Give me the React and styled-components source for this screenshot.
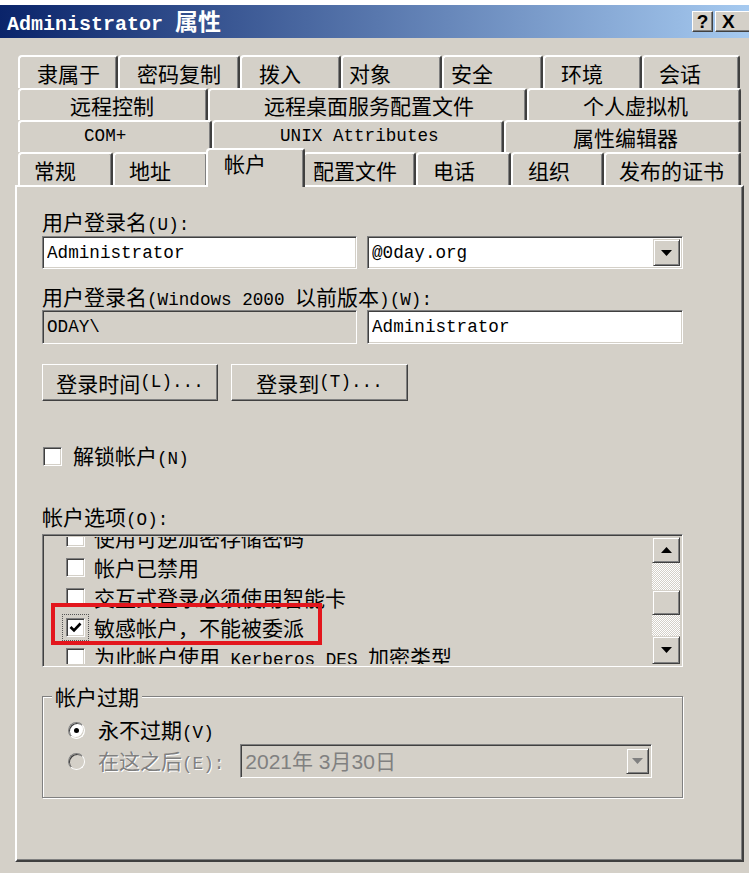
import React from "react";
import styled, { createGlobalStyle, css } from "styled-components";

const FACE = "#d4d0c8";
const SHADOW = "#808080";
const DARK = "#404040";

const GlobalStyle = createGlobalStyle`
  html, body {
    margin: 0;
    padding: 0;
    background: #fff;
  }
  body {
    font-family: "Noto Sans CJK SC", sans-serif;
    font-size: 21px;
    color: #000;
    overflow: hidden;
  }
`;

const Latin = styled.span`
  font-family: "Liberation Mono", monospace;
  font-size: ${(p) => p.$scale || 0.84}em;
  line-height: 1;
`;

// wraps ascii runs so latin text gets the narrow mono face
function Txt({ children, scale }) {
  return String(children)
    .split(/([\x00-\xff]+)/)
    .filter(Boolean)
    .map((part, i) =>
      /^[\x00-\xff]+$/.test(part) ? (
        <Latin key={i} $scale={scale}>
          {part}
        </Latin>
      ) : (
        <React.Fragment key={i}>{part}</React.Fragment>
      )
    );
}

const Window = styled.div`
  margin-top: 5px;
  height: 868px;
  background: ${FACE};
  display: flex;
  flex-direction: column;
  overflow: hidden;
`;

const TitleBar = styled.div`
  height: 33px;
  flex: none;
  display: flex;
  align-items: center;
  justify-content: space-between;
  padding-left: 7px;
  background: linear-gradient(90deg, #0a246a 0%, #a6caf0 100%);
`;

const Title = styled.div`
  color: #fff;
  font-weight: bold;
  font-size: 23px;
  line-height: 26px;
  height: 26px;
  margin-top: -3px;
  white-space: nowrap;
`;

const TitleButtons = styled.div`
  display: flex;
  gap: 2px;
  margin-right: -2px;
`;

const CaptionButton = styled.div`
  width: ${(p) => p.$w}px;
  height: 21px;
  box-sizing: border-box;
  background: ${FACE};
  border: 1px solid;
  border-color: #fff ${DARK} ${DARK} #fff;
  box-shadow: inset -1px -1px 0 ${SHADOW};
  display: flex;
  align-items: center;
  justify-content: ${(p) => (p.$left ? "flex-start" : "center")};
  padding-left: ${(p) => (p.$left ? 6 : 0)}px;
  font-family: "Liberation Sans", sans-serif;
  font-weight: bold;
  font-size: 19px;
  line-height: 1;
`;

const TabStack = styled.div`
  margin: 17px 0 0 18px;
  width: 723px;
  display: flex;
  flex-direction: column;
`;

const TabRow = styled.div`
  display: flex;
  height: ${(p) => p.$h}px;
`;

const Tab = styled.div`
  box-sizing: border-box;
  width: ${(p) => p.$w}px;
  height: 100%;
  flex: none;
  background: ${FACE};
  border-top: 2px solid #fff;
  border-left: 2px solid #fff;
  border-right: 2px solid ${DARK};
  box-shadow: inset -1px 0 0 ${SHADOW};
  border-radius: 4px 3px 0 0;
  padding-left: ${(p) => p.$pad}px;
  display: flex;
  align-items: center;
  white-space: nowrap;
  line-height: 24px;
  ${(p) =>
    p.$active &&
    css`
      position: relative;
      z-index: 2;
      width: ${p.$w + 4}px;
      height: calc(100% + 6px);
      margin: -4px -2px 0;
      padding-left: ${p.$pad + 2}px;
      padding-top: 1px;
      align-items: flex-start;
    `}
`;

const Panel = styled.div`
  margin-left: 15px;
  width: 729px;
  height: 677px;
  box-sizing: border-box;
  border: 2px solid;
  border-color: #fff ${DARK} ${DARK} #fff;
  box-shadow: inset -1px -1px 0 ${SHADOW};
  padding: 22px 59px 0 25px;
  display: flex;
  flex-direction: column;
`;

const Label = styled.div`
  height: 24px;
  line-height: 24px;
  margin-top: ${(p) => p.$mt || 0}px;
  white-space: nowrap;
`;

const FieldRow = styled.div`
  display: grid;
  grid-template-columns: 315px 316px;
  column-gap: 10px;
  margin-top: ${(p) => p.$mt || 0}px;
`;

const sunken = css`
  box-sizing: border-box;
  border: 1px solid;
  border-color: ${SHADOW} #fff #fff ${SHADOW};
  box-shadow: inset 1px 1px 0 ${DARK}, inset -1px -1px 0 ${FACE};
`;

const Field = styled.div`
  ${sunken};
  height: ${(p) => p.$h || 33}px;
  background: ${(p) => (p.$disabled ? FACE : "#fff")};
  display: flex;
  align-items: center;
  padding: 2px 2px 0 4px;
  line-height: 24px;
  white-space: nowrap;
  color: ${(p) => (p.$muted ? SHADOW : "#000")};
`;

const FieldText = styled.span`
  flex: 1;
  overflow: hidden;
  display: flex;
  align-items: center;
  height: 24px;
`;

const ArrowBtn = styled.div`
  width: ${(p) => p.$w || 27}px;
  height: ${(p) => p.$h || 27}px;
  flex: none;
  box-sizing: border-box;
  background: ${FACE};
  border: 1px solid;
  border-color: ${FACE} ${DARK} ${DARK} ${FACE};
  box-shadow: inset 1px 1px 0 #fff, inset -1px -1px 0 ${SHADOW};
  display: flex;
  align-items: center;
  justify-content: center;
`;

const ComboButton = styled(ArrowBtn)`
  margin-top: -2px;
`;

const ButtonRow = styled.div`
  display: flex;
  gap: 13px;
  margin-top: 20px;
`;

const Button = styled.div`
  width: ${(p) => p.$w}px;
  height: 37px;
  box-sizing: border-box;
  background: ${FACE};
  border: 1px solid;
  border-color: #fff ${DARK} ${DARK} #fff;
  box-shadow: inset -1px -1px 0 ${SHADOW};
  display: flex;
  align-items: center;
  justify-content: center;
  line-height: 24px;
  white-space: nowrap;
`;

const CheckRow = styled.div`
  display: flex;
  align-items: center;
  gap: 11px;
  height: 24px;
  line-height: 24px;
  margin-top: ${(p) => p.$mt || 0}px;
  padding-left: 1px;
`;

const Check = styled.span`
  ${sunken};
  width: 19px;
  height: 19px;
  flex: none;
  background: #fff;
  display: inline-flex;
  align-items: center;
  justify-content: center;
  ${(p) =>
    p.$focus &&
    css`
      outline: 1px dotted #555;
      outline-offset: 3px;
    `}
`;

const ListBox = styled.div`
  ${sunken};
  margin-top: 6px;
  height: 133px;
  flex: none;
  background: ${FACE};
  display: flex;
  padding: 2px;
`;

const ListView = styled.div`
  flex: 1;
  overflow: hidden;
`;

const ListInner = styled.div`
  margin-top: -15px;
`;

const ListItem = styled.div`
  height: 30px;
  display: flex;
  align-items: center;
  gap: 9px;
  padding-left: 21px;
  position: relative;
  white-space: nowrap;
  line-height: 24px;
`;

const Highlight = styled.span`
  position: absolute;
  left: 6px;
  top: -9px;
  width: 271px;
  height: 42px;
  box-sizing: border-box;
  border: 4px solid #e3161d;
  pointer-events: none;
`;

const ScrollBar = styled.div`
  width: 28px;
  display: flex;
  flex-direction: column;
`;

const Track = styled.div`
  height: ${(p) => (p.$h ? `${p.$h}px` : "auto")};
  flex: ${(p) => (p.$h ? "none" : 1)};
  background: repeating-conic-gradient(#fff 0 25%, ${FACE} 0 50%) 0 0 / 2px 2px;
`;

const Group = styled.fieldset`
  margin: 17px 0 0;
  padding: 10px 0 19px 25px;
  border: 1px solid ${SHADOW};
  box-shadow: inset 1px 1px 0 #fff, 1px 1px 0 #fff;
  min-width: 0;
  display: flex;
  flex-direction: column;
  gap: 2px;
`;

const Legend = styled.legend`
  margin-left: -16px;
  padding: 0 3px;
  height: 24px;
  line-height: 24px;
  background: ${FACE};
`;

const RadioRow = styled.div`
  display: flex;
  align-items: center;
  gap: 13px;
  height: ${(p) => p.$h || 24}px;
  white-space: nowrap;
  line-height: 24px;
  color: ${(p) => (p.$disabled ? SHADOW : "#000")};
  text-shadow: ${(p) => (p.$disabled ? "1px 1px 0 #fff" : "none")};
`;

const Radio = styled.span`
  width: 17px;
  height: 17px;
  flex: none;
  box-sizing: border-box;
  border-radius: 50%;
  border: 1px solid;
  border-color: ${SHADOW} #fff #fff ${SHADOW};
  box-shadow: inset 1px 1px 0 ${DARK}, inset -1px -1px 0 ${FACE};
  background: ${(p) => (p.$disabled ? FACE : "#fff")};
  display: flex;
  align-items: center;
  justify-content: center;
  &::after {
    content: "";
    width: 5px;
    height: 5px;
    border-radius: 50%;
    background: #000;
    display: ${(p) => (p.$checked ? "block" : "none")};
  }
`;

const DateCombo = styled(Field)`
  margin-left: 3px;
  width: 412px;
  text-shadow: none;
  font-family: "Liberation Sans", "Noto Sans CJK SC", sans-serif;
`;

const Arrow = ({ up, color = "#000" }) => (
  <svg width="11" height="6" viewBox="0 0 11 6">
    <polygon points={up ? "0,6 11,6 5.5,0" : "0,0 11,0 5.5,6"} fill={color} />
  </svg>
);

const Tick = () => (
  <svg width="13" height="11" viewBox="0 0 13 11">
    <polyline points="1.5,5 5,8.5 11.5,1.5" fill="none" stroke="#000" strokeWidth="2.6" />
  </svg>
);

const rows = [
  {
    h: 33,
    tabs: [
      ["隶属于", 100, 17],
      ["密码复制", 122, 17],
      ["拨入", 101, 17],
      ["对象", 101, 6],
      ["安全", 101, 7],
      ["环境", 99, 16],
      ["会话", 98, 15],
    ],
  },
  {
    h: 32,
    tabs: [
      ["远程控制", 190, 50],
      ["远程桌面服务配置文件", 319, 54],
      ["个人虚拟机", 214, 54],
    ],
  },
  {
    h: 32,
    tabs: [
      ["COM+", 194, 64],
      ["UNIX Attributes", 292, 66],
      ["属性编辑器", 237, 67],
    ],
  },
  {
    h: 33,
    tabs: [
      ["常规", 95, 14],
      ["地址", 95, 14],
      ["帐户", 95, 14, true],
      ["配置文件", 113, 8],
      ["电话", 95, 15],
      ["组织", 93, 15],
      ["发布的证书", 137, 13],
    ],
  },
];

const options = [
  ["使用可逆加密存储密码"],
  ["帐户已禁用"],
  ["交互式登录必须使用智能卡"],
  ["敏感帐户，不能被委派", true],
  ["为此帐户使用 Kerberos DES 加密类型"],
];

export default function App() {
  return (
    <>
      <GlobalStyle />
      <Window>
        <TitleBar>
          <Title>
            <Txt scale={0.87}>Administrator 属性</Txt>
          </Title>
          <TitleButtons>
            <CaptionButton $w={21}>?</CaptionButton>
            <CaptionButton $w={36} $left>
              X
            </CaptionButton>
          </TitleButtons>
        </TitleBar>

        <TabStack>
          {rows.map((row, r) => (
            <TabRow key={r} $h={row.h}>
              {row.tabs.map(([label, w, pad, active]) => (
                <Tab key={label} $w={w} $pad={pad} $active={active}>
                  <Txt>{label}</Txt>
                </Tab>
              ))}
            </TabRow>
          ))}
        </TabStack>

        <Panel>
          <Label>
            <Txt>用户登录名(U):</Txt>
          </Label>
          <FieldRow $mt={3}>
            <Field>
              <FieldText>
                <Txt>Administrator</Txt>
              </FieldText>
            </Field>
            <Field>
              <FieldText>
                <Txt>@0day.org</Txt>
              </FieldText>
              <ComboButton>
                <Arrow />
              </ComboButton>
            </Field>
          </FieldRow>

          <Label $mt={15}>
            <Txt>用户登录名(Windows 2000 以前版本)(W):</Txt>
          </Label>
          <FieldRow $mt={2}>
            <Field $h={34} $disabled>
              <FieldText>
                <Txt>ODAY\</Txt>
              </FieldText>
            </Field>
            <Field $h={34}>
              <FieldText>
                <Txt>Administrator</Txt>
              </FieldText>
            </Field>
          </FieldRow>

          <ButtonRow>
            <Button $w={176}>
              <Txt>登录时间(L)...</Txt>
            </Button>
            <Button $w={177}>
              <Txt>登录到(T)...</Txt>
            </Button>
          </ButtonRow>

          <CheckRow $mt={43}>
            <Check />
            <span>
              <Txt>解锁帐户(N)</Txt>
            </span>
          </CheckRow>

          <Label $mt={36}>
            <Txt>帐户选项(O):</Txt>
          </Label>
          <ListBox>
            <ListView>
              <ListInner>
                {options.map(([label, checked]) => (
                  <ListItem key={label}>
                    <Check $focus={checked}>{checked && <Tick />}</Check>
                    <span>
                      <Txt>{label}</Txt>
                    </span>
                    {checked && <Highlight />}
                  </ListItem>
                ))}
              </ListInner>
            </ListView>
            <ScrollBar>
              <ArrowBtn $w={28} $h={26}>
                <Arrow up />
              </ArrowBtn>
              <Track $h={27} />
              <ArrowBtn $w={28} $h={25} />
              <Track />
              <ArrowBtn $w={28} $h={28}>
                <Arrow />
              </ArrowBtn>
            </ScrollBar>
          </ListBox>

          <Group>
            <Legend>帐户过期</Legend>
            <RadioRow>
              <Radio $checked />
              <span>
                <Txt>永不过期(V)</Txt>
              </span>
            </RadioRow>
            <RadioRow $h={34} $disabled>
              <Radio $disabled />
              <span>
                <Txt>在这之后(E):</Txt>
              </span>
              <DateCombo $h={34} $disabled $muted>
                <FieldText>2021年 3月30日</FieldText>
                <ComboButton $w={23} $h={26}>
                  <Arrow color={SHADOW} />
                </ComboButton>
              </DateCombo>
            </RadioRow>
          </Group>
        </Panel>
      </Window>
    </>
  );
}
